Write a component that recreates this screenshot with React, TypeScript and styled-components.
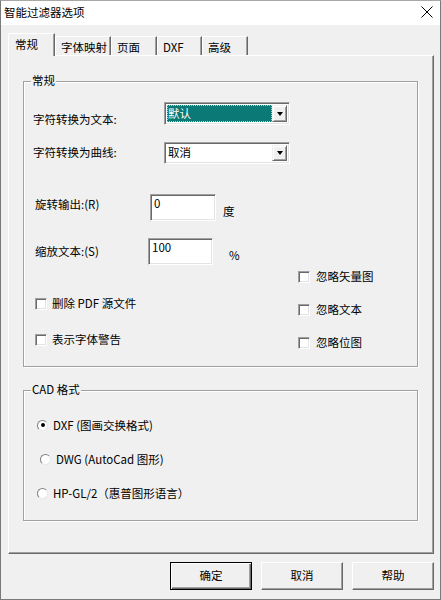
import React from 'react';
import styled, { createGlobalStyle } from 'styled-components';

const Global = createGlobalStyle`
  html, body { margin: 0; padding: 0; background: #f0f0f0; }
  body {
    font-family: "Noto Sans CJK SC", "Noto Sans", sans-serif;
    font-size: 11.5px;
    line-height: 14px;
    color: #000;
  }
  * { box-sizing: border-box; }
`;

const Window = styled.div`
  width: 441px;
  height: 600px;
  display: flex;
  flex-direction: column;
  background: #f0f0f0;
  border: 1px solid #7a7a7a;
  border-top-color: #a8a8a8;
`;

const TitleBar = styled.div`
  height: 24px;
  flex: none;
  background: #fff;
  display: flex;
  align-items: center;
  justify-content: space-between;
  padding: 0 7px 2px 3px;
`;

const Title = styled.span`
  font-size: 11.5px;
  color: #000;
`;

const Body = styled.div`
  flex: 1;
  display: flex;
  flex-direction: column;
  padding: 8px 6px 0 7px;
`;

const TabRow = styled.div`
  display: flex;
  align-items: flex-start;
  height: 23px;
  margin-bottom: -1px;
  position: relative;
  z-index: 1;
`;

const Tab = styled.div<{ $active?: boolean; $w: number }>`
  width: ${(p) => p.$w}px;
  height: ${(p) => (p.$active ? 23 : 19)}px;
  margin-top: ${(p) => (p.$active ? 0 : 3)}px;
  padding: 3px 0 0 ${(p) => (p.$active ? 6 : 5)}px;
  background: #f0f0f0;
  border-left: 1px solid #fff;
  border-top: 1px solid #fff;
  border-right: 1px solid #696969;
  box-shadow: inset -1px 0 0 #a0a0a0;
  border-top-left-radius: 2px;
  white-space: nowrap;
`;

const Panel = styled.div`
  width: 426px;
  height: 499px;
  border: 1px solid;
  border-color: #fff #696969 #696969 #fff;
  box-shadow: inset -1px -1px 0 #a0a0a0;
  padding: 25px 15px 0 14px;
  display: flex;
  flex-direction: column;
`;

const Group = styled.div<{ $h: number; $mt?: number; $pt: number }>`
  position: relative;
  height: ${(p) => p.$h}px;
  margin-top: ${(p) => p.$mt ?? 0}px;
  padding-top: ${(p) => p.$pt}px;
  border: 1px solid #a0a0a0;
  box-shadow: inset 1px 1px 0 #fff, 1px 1px 0 #fff;
  display: flex;
  flex-direction: column;
`;

const Legend = styled.span`
  position: absolute;
  top: -9px;
  left: 7px;
  padding: 0 1px;
  background: #f0f0f0;
  line-height: 14px;
  white-space: nowrap;
`;

const Row = styled.div<{ $mt?: number; $pl: number }>`
  display: flex;
  align-items: flex-start;
  margin-top: ${(p) => p.$mt ?? 0}px;
  padding-left: ${(p) => p.$pl}px;
`;

const Label = styled.span<{ $w: number; $dy: number }>`
  width: ${(p) => p.$w}px;
  flex: none;
  padding-top: ${(p) => p.$dy}px;
  white-space: nowrap;
`;

const Unit = styled.span<{ $ml: number; $dy: number }>`
  margin-left: ${(p) => p.$ml}px;
  padding-top: ${(p) => p.$dy}px;
`;

const Combo = styled.div<{ $h: number }>`
  width: 126px;
  height: ${(p) => p.$h}px;
  display: flex;
  border: 1px solid;
  border-color: #a0a0a0 #fff #fff #a0a0a0;
  box-shadow: inset 1px 1px 0 #696969, inset -1px -1px 0 #e3e3e3;
  background: #fff;
  padding: 2px;
`;

const ComboText = styled.div<{ $selected?: boolean }>`
  flex: 1;
  display: flex;
  align-items: center;
  padding: 0 0 2px 1px;
  background: ${(p) => (p.$selected ? '#0b7a77' : '#fff')};
  color: ${(p) => (p.$selected ? '#fff' : '#000')};
  outline: ${(p) => (p.$selected ? '1px dotted #9fd6d2' : 'none')};
  outline-offset: -1px;
`;

const DropButton = styled.div`
  width: 15px;
  flex: none;
  display: flex;
  align-items: center;
  justify-content: center;
  background: #f0f0f0;
  border: 1px solid;
  border-color: #f0f0f0 #696969 #696969 #f0f0f0;
  box-shadow: inset 1px 1px 0 #fff, inset -1px -1px 0 #a0a0a0;
`;

const Arrow = styled.span`
  width: 0;
  height: 0;
  border-left: 3.5px solid transparent;
  border-right: 3.5px solid transparent;
  border-top: 4px solid #000;
`;

const TextBox = styled.div<{ $w: number }>`
  width: ${(p) => p.$w}px;
  height: 27px;
  background: #fff;
  border: 1px solid;
  border-color: #a0a0a0 #fff #fff #a0a0a0;
  box-shadow: inset 1px 1px 0 #696969, inset -1px -1px 0 #e3e3e3;
  padding: 1px 0 0 3px;
`;

const CheckArea = styled.div`
  display: flex;
  margin-top: 6px;
  padding-left: 11px;
`;

const CheckColumn = styled.div<{ $w?: number; $pt: number; $gap: number }>`
  width: ${(p) => (p.$w ? `${p.$w}px` : 'auto')};
  flex: none;
  display: flex;
  flex-direction: column;
  gap: ${(p) => p.$gap}px;
  padding-top: ${(p) => p.$pt}px;
`;

const CheckItem = styled.label<{ $gap: number }>`
  display: flex;
  align-items: center;
  gap: ${(p) => p.$gap}px;
  height: 12px;
  white-space: nowrap;
`;

const CheckText = styled.span`
  margin-top: -2px;
`;

const Box = styled.span`
  width: 12px;
  height: 12px;
  flex: none;
  background: #fff;
  border: 1px solid;
  border-color: #a0a0a0 #fff #fff #a0a0a0;
  box-shadow: inset 1px 1px 0 #696969, inset -1px -1px 0 #e3e3e3;
`;

const RadioList = styled.div`
  display: flex;
  flex-direction: column;
  gap: 20px;
  padding-left: 13px;
`;

const RadioItem = styled.label<{ $shift?: number }>`
  display: flex;
  align-items: center;
  gap: 5px;
  height: 14px;
  margin-left: ${(p) => p.$shift ?? 0}px;
  white-space: nowrap;
`;

const RadioDot = styled.span<{ $on?: boolean }>`
  width: 11px;
  height: 11px;
  flex: none;
  border-radius: 50%;
  background: #fff;
  border: 1px solid;
  border-color: #808080 #e8e8e8 #e8e8e8 #808080;
  display: flex;
  align-items: center;
  justify-content: center;
  &::after {
    content: '';
    width: 4px;
    height: 4px;
    border-radius: 50%;
    background: ${(p) => (p.$on ? '#000' : 'transparent')};
  }
`;

const ButtonRow = styled.div`
  display: flex;
  justify-content: flex-end;
  gap: 9px;
  margin-top: 8px;
`;

const Button = styled.div<{ $default?: boolean }>`
  width: 82px;
  height: 28px;
  display: flex;
  align-items: center;
  justify-content: center;
  padding-bottom: 2px;
  background: #f0f0f0;
  border: 1px solid;
  border-color: ${(p) => (p.$default ? '#000' : '#fff #696969 #696969 #fff')};
  box-shadow: ${(p) =>
    p.$default
      ? 'inset 1px 1px 0 #fff, inset -1px -1px 0 #696969, inset -2px -2px 0 #a0a0a0'
      : 'inset -1px -1px 0 #a0a0a0'};
`;

const CloseIcon = () => (
  <svg width="12" height="12" viewBox="0 0 12 12">
    <path d="M0.5 0.5 L11.5 11.5 M11.5 0.5 L0.5 11.5" stroke="#000" strokeWidth="1" fill="none" />
  </svg>
);

const tabs: { label: string; w: number; active?: boolean }[] = [
  { label: '常规', w: 47, active: true },
  { label: '字体映射', w: 56 },
  { label: '页面', w: 46 },
  { label: 'DXF', w: 45 },
  { label: '高级', w: 46 },
];

export default function App() {
  return (
    <>
      <Global />
      <Window>
        <TitleBar>
          <Title>智能过滤器选项</Title>
          <CloseIcon />
        </TitleBar>
        <Body>
          <TabRow>
            {tabs.map((t) => (
              <Tab key={t.label} $w={t.w} $active={t.active}>
                {t.label}
              </Tab>
            ))}
          </TabRow>
          <Panel>
            <Group $h={286} $pt={20}>
              <Legend>常规</Legend>
              <Row $pl={9}>
                <Label $w={131} $dy={10}>字符转换为文本:</Label>
                <Combo $h={23}>
                  <ComboText $selected>默认</ComboText>
                  <DropButton>
                    <Arrow />
                  </DropButton>
                </Combo>
              </Row>
              <Row $mt={16} $pl={9}>
                <Label $w={131} $dy={3}>字符转换为曲线:</Label>
                <Combo $h={22}>
                  <ComboText>取消</ComboText>
                  <DropButton>
                    <Arrow />
                  </DropButton>
                </Combo>
              </Row>
              <Row $mt={30} $pl={11}>
                <Label $w={115} $dy={3}>旋转输出:(R)</Label>
                <TextBox $w={66}>0</TextBox>
                <Unit $ml={7} $dy={10}>度</Unit>
              </Row>
              <Row $mt={17} $pl={11}>
                <Label $w={113} $dy={6}>缩放文本:(S)</Label>
                <TextBox $w={65}>100</TextBox>
                <Unit $ml={16} $dy={10}>%</Unit>
              </Row>
              <CheckArea>
                <CheckColumn $w={263} $pt={27} $gap={24}>
                  <CheckItem $gap={5}>
                    <Box />
                    <CheckText>删除 PDF 源文件</CheckText>
                  </CheckItem>
                  <CheckItem $gap={5}>
                    <Box />
                    <CheckText>表示字体警告</CheckText>
                  </CheckItem>
                </CheckColumn>
                <CheckColumn $pt={0} $gap={21}>
                  <CheckItem $gap={6}>
                    <Box />
                    <CheckText>忽略矢量图</CheckText>
                  </CheckItem>
                  <CheckItem $gap={6}>
                    <Box />
                    <CheckText>忽略文本</CheckText>
                  </CheckItem>
                  <CheckItem $gap={6}>
                    <Box />
                    <CheckText>忽略位图</CheckText>
                  </CheckItem>
                </CheckColumn>
              </CheckArea>
            </Group>
            <Group $h={131} $mt={23} $pt={27}>
              <Legend>CAD 格式</Legend>
              <RadioList>
                <RadioItem>
                  <RadioDot $on />
                  DXF (图画交换格式)
                </RadioItem>
                <RadioItem $shift={3}>
                  <RadioDot />
                  DWG (AutoCad 图形)
                </RadioItem>
                <RadioItem>
                  <RadioDot />
                  HP-GL/2（惠普图形语言）
                </RadioItem>
              </RadioList>
            </Group>
          </Panel>
          <ButtonRow>
            <Button $default>确定</Button>
            <Button>取消</Button>
            <Button>帮助</Button>
          </ButtonRow>
        </Body>
      </Window>
    </>
  );
}
